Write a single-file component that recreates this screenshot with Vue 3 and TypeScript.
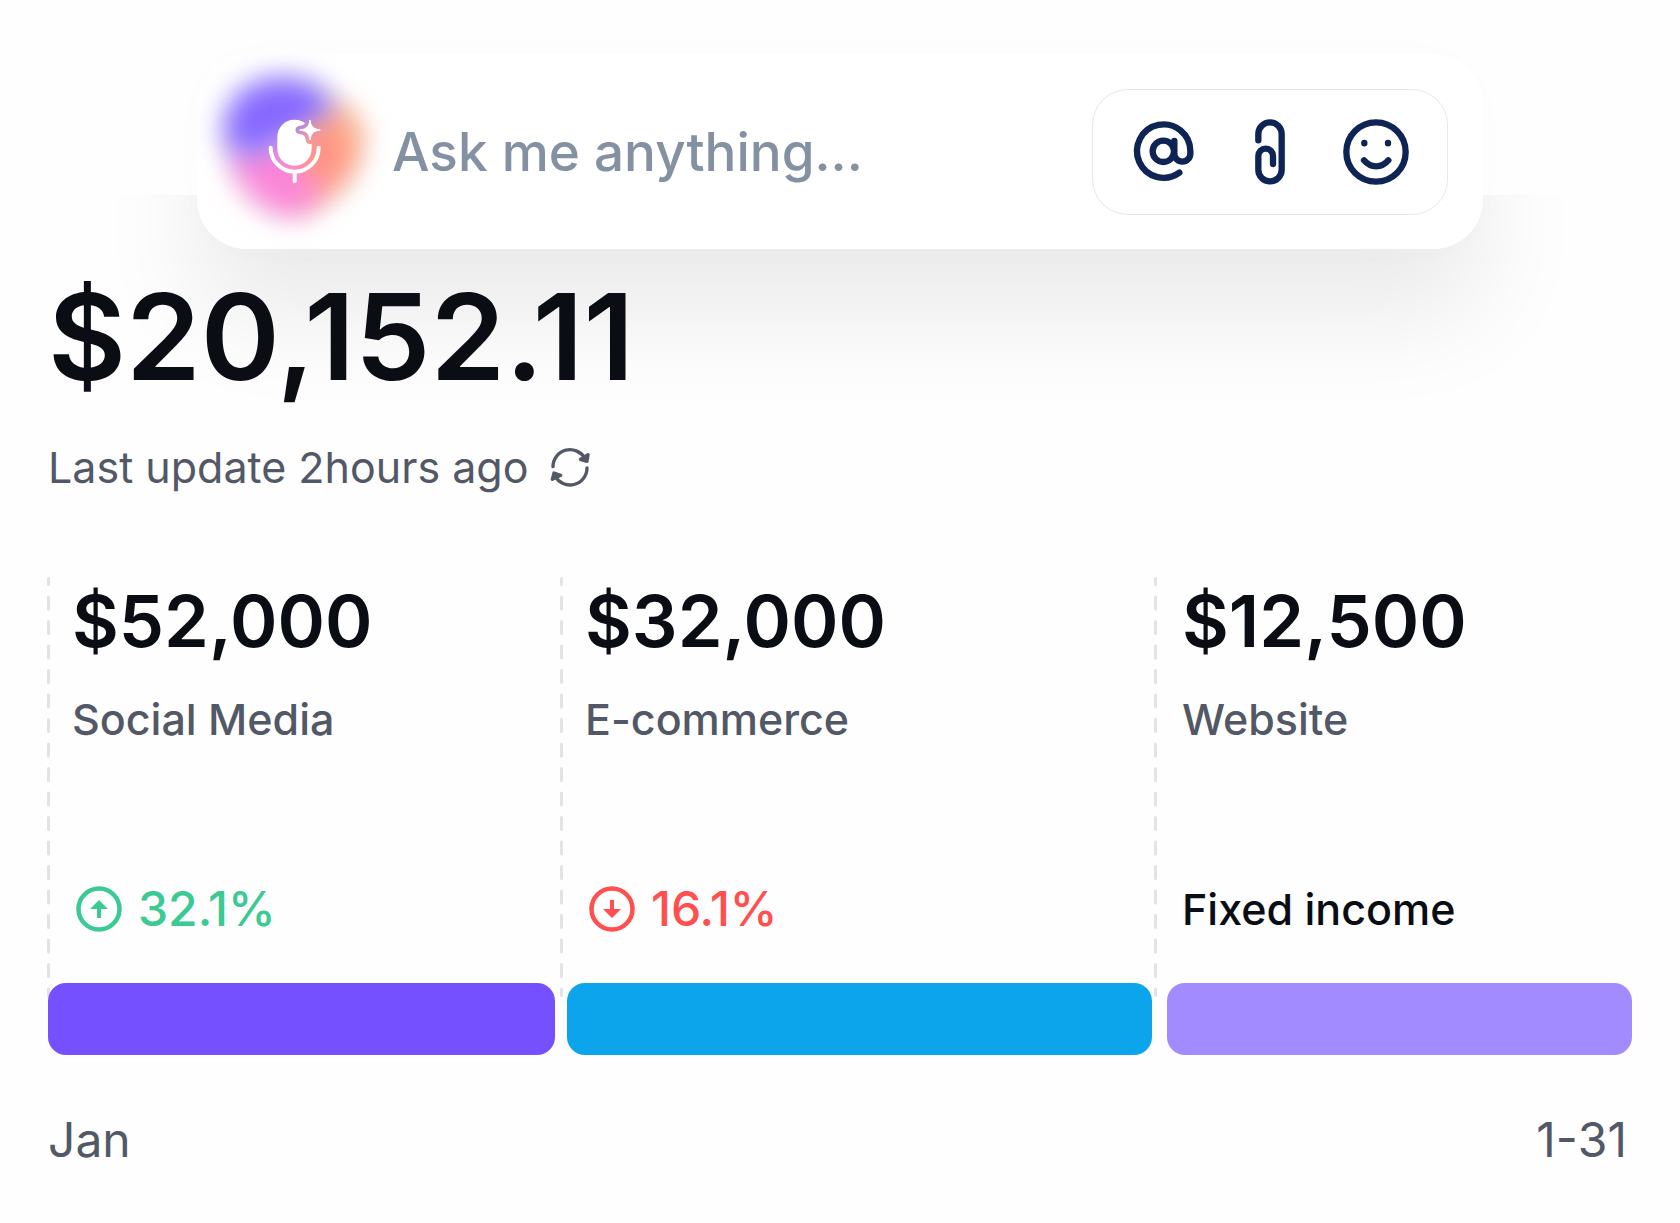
<script setup lang="ts">
import { ref } from 'vue'

interface Source {
  id: string
  amount: string
  label: string
  trend: 'up' | 'down' | 'none'
  note: string
}

const question = ref('')

const sources: Source[] = [
  { id: 'social', amount: '$52,000', label: 'Social Media', trend: 'up', note: '32.1%' },
  { id: 'commerce', amount: '$32,000', label: 'E-commerce', trend: 'down', note: '16.1%' },
  { id: 'website', amount: '$12,500', label: 'Website', trend: 'none', note: 'Fixed income' },
]
</script>

<template>
  <main class="page">
    <form class="ask" @submit.prevent>
      <button class="voice" type="button" aria-label="Speak">
        <svg viewBox="22 42 585 585" aria-hidden="true">
          <defs>
            <filter id="halo" x="-60%" y="-60%" width="220%" height="220%">
              <feGaussianBlur stdDeviation="32" />
            </filter>
            <filter id="haze" x="-60%" y="-60%" width="220%" height="220%" color-interpolation-filters="sRGB">
              <feGaussianBlur stdDeviation="42" />
            </filter>
            <mask id="bite" maskUnits="userSpaceOnUse" x="200" y="200" width="240" height="260">
              <rect x="200" y="200" width="240" height="260" fill="#fff" />
              <path d="M361 240C364 260 371 267 392 270C371 273 364 280 361 300C358 280 351 273 330 270C351 267 358 260 361 240Z" fill="#000" stroke="#000" stroke-width="25" stroke-linejoin="round" />
            </mask>
          </defs>
          <ellipse cx="312" cy="322" rx="212" ry="212" fill="#000" opacity="0.05" filter="url(#halo)" />
          <g filter="url(#haze)">
            <path d="M410 196C480 186 525 235 518 310C508 400 440 460 360 500C320 500 270 420 280 350C300 260 350 220 410 196Z" fill="#ffb08c" />
          </g>
          <g filter="url(#haze)">
            <path d="M124 345C220 280 340 300 390 390C415 450 360 532 300 530C210 510 140 450 124 345Z" fill="#fb86d9" />
          </g>
          <g filter="url(#haze)">
            <path d="M104 300C90 180 175 112 280 114C360 116 412 150 422 200C410 260 330 275 290 300C220 340 150 380 104 300Z" fill="#8668ff" />
          </g>
          <g filter="url(#haze)">
            <ellipse cx="395" cy="340" rx="66" ry="80" fill="#ff8f84" />
          </g>
          <g fill="#fff">
            <rect x="263" y="239" width="103" height="138" rx="51" mask="url(#bite)" />
            <path d="M361 240C364 260 371 267 392 270C371 273 364 280 361 300C358 280 351 273 330 270C351 267 358 260 361 240Z" stroke="#fff" stroke-width="3" stroke-linejoin="round" />
            <path d="M243 323A72 72 0 0 0 387 323M315 395V424" fill="none" stroke="#fff" stroke-width="12" stroke-linecap="round" />
          </g>
        </svg>
      </button>
      <input v-model="question" class="ask-input" type="text" placeholder="Ask me anything..." aria-label="Ask me anything" />
      <div class="tools">
        <button class="tool" type="button" aria-label="Mention">
          <svg viewBox="0 0 234 234" aria-hidden="true">
            <circle cx="115" cy="115" r="32" />
            <path d="M148 84V122a24 24 0 0 0 48 0V115A80 80 0 1 0 163 179" />
          </svg>
        </button>
        <button class="tool" type="button" aria-label="Attach">
          <svg viewBox="0 0 234 234" aria-hidden="true">
            <path d="M82 82V63a35 35 0 0 1 70 0V170a35 35 0 0 1-70 0V129a22 22 0 0 1 44 0V153" />
          </svg>
        </button>
        <button class="tool" type="button" aria-label="Emoji">
          <svg viewBox="0 0 234 234" aria-hidden="true">
            <circle cx="117" cy="117" r="89" />
            <path d="M81 142C101 166 134 166 154 142M82 90V91M153 90V91" />
          </svg>
        </button>
      </div>
    </form>

    <section class="card">
      <h1 class="balance">$20,152.11</h1>
      <div class="updated">
        <span>Last update 2hours ago</span>
        <button class="refresh" type="button" aria-label="Refresh">
          <svg viewBox="0 0 126 126" aria-hidden="true">
            <path d="M12 62A51 51 0 0 1 108 38M114 66A51 51 0 0 1 18 90" fill="none" />
            <path d="M117 26L114 46L94 40ZM10 100L15 81L35 88Z" />
          </svg>
        </button>
      </div>

      <div class="sources">
        <article v-for="s in sources" :key="s.id" class="source" :class="s.id">
          <svg class="divider" viewBox="0 0 3 420" preserveAspectRatio="none" aria-hidden="true">
            <path d="M1.5 1.5V418.5" pathLength="834" />
          </svg>
          <div class="details">
            <h2 class="amount">{{ s.amount }}</h2>
            <p class="label">{{ s.label }}</p>
            <p class="note" :class="s.trend">
              <svg v-if="s.trend !== 'none'" viewBox="0 0 54 54" aria-hidden="true">
                <circle cx="27" cy="27" r="20.5" fill="none" stroke="currentColor" stroke-width="4.5" />
                <path v-if="s.trend === 'up'" d="M27 18L36 27H29V36H25V27H18Z" fill="currentColor" />
                <path v-else d="M27 36L18 27H25V18H29V27H36Z" fill="currentColor" />
              </svg>
              <span>{{ s.note }}</span>
            </p>
          </div>
          <div class="bar"></div>
        </article>
      </div>

      <footer class="period">
        <span>Jan</span>
        <span>1-31</span>
      </footer>
    </section>
  </main>
</template>

<style>
body {
  margin: 0;
  background: #fefefe;
}
</style>

<style scoped>
.page {
  padding-top: 54px;
  font-family: Inter, 'Liberation Sans', sans-serif;
  color: #0a0d14;
}

button {
  padding: 0;
  border: 0;
  background: none;
  cursor: pointer;
}

svg {
  display: block;
}

h1,
h2,
p {
  margin: 0;
}

.ask {
  position: relative;
  z-index: 1;
  display: flex;
  align-items: center;
  height: 195px;
  margin: 0 197px;
  box-sizing: border-box;
  padding-right: 35px;
  border-radius: 50px;
  background: #fff;
  box-shadow: 0 0 60px rgba(0, 0, 0, 0.01);
}

.voice {
  flex: none;
  width: 195px;
  height: 195px;
}

.ask-input {
  flex: 1;
  min-width: 0;
  padding: 0;
  border: 0;
  outline: 0;
  background: none;
  font: 500 53px/72px Inter, 'Liberation Sans', sans-serif;
  color: #0a0d14;
}

.ask-input::placeholder {
  color: #8491a3;
  opacity: 1;
}

.tools {
  display: flex;
  gap: 28px;
  padding: 23px 32px;
  border: 1px solid #e8e8e8;
  border-radius: 36px;
}

.tool {
  width: 78px;
  height: 78px;
}

.tool svg {
  fill: none;
  stroke: #0d2454;
  stroke-width: 19;
  stroke-linecap: round;
  stroke-linejoin: round;
}

.card {
  position: relative;
  overflow: hidden;
  margin-top: -54px;
  padding: 70px 48px 53px;
  border-radius: 42px;
  background: #fefefe;
}

/* Shadow that the ask bar casts on the card */
.card::before {
  content: '';
  position: absolute;
  top: -141px;
  left: 197px;
  right: 197px;
  height: 195px;
  border-radius: 50px;
  box-shadow: 0 68px 104px rgba(0, 0, 0, 0.08);
}

.balance {
  position: relative;
  font-size: 120px;
  font-weight: 600;
  line-height: 144px;
}

.updated {
  display: flex;
  align-items: center;
  gap: 20px;
  margin-top: 28px;
  font-size: 43px;
  line-height: 60px;
  color: #525866;
}

.refresh svg {
  width: 42px;
  height: 42px;
  fill: #525866;
  stroke: #525866;
  stroke-width: 10;
  stroke-linecap: round;
  stroke-linejoin: round;
}

.sources {
  display: grid;
  grid-template-columns: 513fr 594fr 477fr;
  margin-top: 80px;
}

.source {
  position: relative;
}

.divider {
  position: absolute;
  top: 0;
  left: -1px;
  width: 3px;
  height: 420px;
  fill: none;
  stroke: #e2e2e7;
  stroke-width: 3;
  stroke-linecap: round;
  stroke-dasharray: 24 25;
  stroke-dashoffset: 12;
}

.details {
  padding: 2px 0 44px 24px;
}

.website .details {
  padding-left: 27px;
}

.amount {
  font-size: 72px;
  font-weight: 600;
  line-height: 84px;
}

.label {
  margin-top: 26px;
  font-size: 43px;
  font-weight: 500;
  line-height: 60px;
  color: #525866;
}

.note {
  display: flex;
  align-items: center;
  gap: 12px;
  margin-top: 130px;
  font-size: 48px;
  font-weight: 500;
  line-height: 60px;
}

.note svg {
  width: 54px;
  height: 54px;
}

.up {
  color: #3bc994;
}

.down {
  color: #ff4f4f;
}

.none {
  font-size: 43px;
}

.bar {
  position: relative;
  height: 72px;
  border-radius: 18px;
}

.social .bar {
  margin-right: 6px;
  background: #7450ff;
}

.commerce .bar {
  margin: 0 3px 0 6px;
  background: #0ca5eb;
}

.website .bar {
  margin-left: 12px;
  background: #a28bff;
}

.period {
  display: flex;
  justify-content: space-between;
  margin-top: 55px;
  padding-right: 5px;
  font-size: 48px;
  font-kerning: none;
  line-height: 60px;
  color: #525866;
}
</style>
